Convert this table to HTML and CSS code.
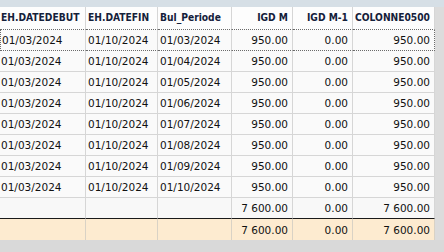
FILE: index.html
```html
<!DOCTYPE html>
<html>
<head>
<meta charset="utf-8">
<link rel="stylesheet" href="styles.css">
</head>
<body>
<div class="topbar"></div>
<div class="main">
  <table class="grid">
    <colgroup>
      <col class="c1"><col class="c2"><col class="c3"><col class="c4"><col class="c5"><col class="c6">
    </colgroup>
    <thead>
      <tr>
        <th>EH.DATEDEBUT</th><th>EH.DATEFIN</th><th>Bul_Periode</th><th class="num">IGD M</th><th class="num">IGD M-1</th><th class="num">COLONNE0500</th>
      </tr>
    </thead>
    <tbody>
      <tr class="focus"><td>01/03/2024</td><td>01/10/2024</td><td>01/03/2024</td><td class="num">950.00</td><td class="num">0.00</td><td class="num">950.00</td></tr>
      <tr><td>01/03/2024</td><td>01/10/2024</td><td>01/04/2024</td><td class="num">950.00</td><td class="num">0.00</td><td class="num">950.00</td></tr>
      <tr><td>01/03/2024</td><td>01/10/2024</td><td>01/05/2024</td><td class="num">950.00</td><td class="num">0.00</td><td class="num">950.00</td></tr>
      <tr><td>01/03/2024</td><td>01/10/2024</td><td>01/06/2024</td><td class="num">950.00</td><td class="num">0.00</td><td class="num">950.00</td></tr>
      <tr><td>01/03/2024</td><td>01/10/2024</td><td>01/07/2024</td><td class="num">950.00</td><td class="num">0.00</td><td class="num">950.00</td></tr>
      <tr><td>01/03/2024</td><td>01/10/2024</td><td>01/08/2024</td><td class="num">950.00</td><td class="num">0.00</td><td class="num">950.00</td></tr>
      <tr><td>01/03/2024</td><td>01/10/2024</td><td>01/09/2024</td><td class="num">950.00</td><td class="num">0.00</td><td class="num">950.00</td></tr>
      <tr><td>01/03/2024</td><td>01/10/2024</td><td>01/10/2024</td><td class="num">950.00</td><td class="num">0.00</td><td class="num">950.00</td></tr>
      <tr class="totals"><td></td><td></td><td></td><td class="num">7 600.00</td><td class="num">0.00</td><td class="num">7 600.00</td></tr>
    </tbody>
    <tfoot>
      <tr><td></td><td></td><td></td><td class="num">7 600.00</td><td class="num">0.00</td><td class="num">7 600.00</td></tr>
    </tfoot>
  </table>
  <div class="scroll"></div>
</div>
<div class="bottom"></div>
</body>
</html>
```

FILE: styles.css
```css
html, body {
  margin: 0;
  padding: 0;
  width: 444px;
  height: 252px;
  overflow: hidden;
  background: #d9d9d9;
}
body {
  font-family: "DejaVu Sans", "Liberation Sans", sans-serif;
  font-size: 10.5px;
  color: #111;
}
.topbar {
  height: 7px;
  background: #d6dfe6;
}
.main {
  display: flex;
  background: #dcdcdc;
}
.grid {
  border-collapse: separate;
  border-spacing: 0;
  table-layout: fixed;
  width: 435px;
  background: #fafafa;
}
.c1 { width: 86px; }
.c2 { width: 72px; }
.c3 { width: 74px; }
.c4 { width: 61px; }
.c5 { width: 60px; }
.c6 { width: 82px; }
.scroll {
  flex: 1;
  background: #dcdcdc;
}
th, td {
  box-sizing: border-box;
  padding: 0 4px 0 2px;
  white-space: nowrap;
  overflow: hidden;
  text-align: left;
  border-right: 1px solid #d6d6d6;
  border-bottom: 1px solid #d6d6d6;
  height: 21px;
  line-height: 20px;
}
th {
  background: #fdfdfd;
  font-family: "DejaVu Sans Condensed", "DejaVu Sans", sans-serif;
  font-stretch: condensed;
  font-weight: bold;
  font-size: 10.2px;
  color: #14203a;
  height: 23px;
  line-height: 22px;
  border-bottom: 1px dotted #6a6a6a;
}
th:first-child, td:first-child {
  padding-left: 1px;
}
.num {
  text-align: right;
}
.focus td {
  border-bottom: 1px dotted #6a6a6a;
}
.focus td:last-child {
  border-right: 1px dotted #6a6a6a;
}
.focus td:first-child {
  border-left: 1px dotted #6a6a6a;
}
.totals td {
  background: #f8f8f8;
  border-bottom: 1px solid #1a1a1a;
}
tfoot td {
  background: #fdebd0;
  border-bottom: none;
  border-right-color: #d9d2c5;
}
.bottom {
  height: 12px;
  background: #d9d9d9;
}
```
